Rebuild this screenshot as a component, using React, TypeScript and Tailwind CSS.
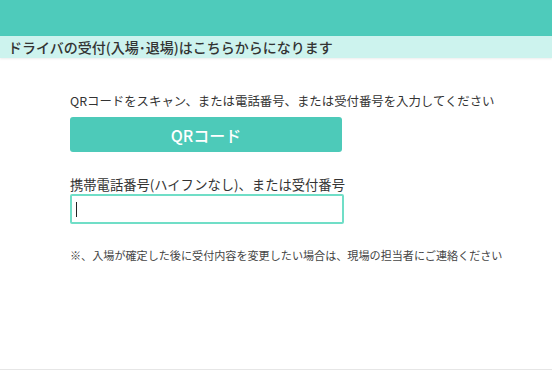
import React from "react";

export default function App() {
  return (
    <div className="flex h-[370px] w-[552px] flex-col border-b border-[#e6e6e6] bg-white font-['Noto_Sans_CJK_JP','Noto_Sans',sans-serif] text-[#333]">
      <div className="h-[36px] shrink-0 bg-[#4ecbbb]" />
      <div className="h-[22px] shrink-0 bg-[#cdf3ee] pl-2 text-[14px] font-medium leading-[22px] text-[#333] shadow-[0_1px_2px_rgba(0,0,0,0.08)]">
        ドライバの受付(入場･退場)はこちらからになります
      </div>
      <div className="flex flex-col pl-[70px]">
        <p className="mt-[35px] text-[12.4px] leading-[16px] whitespace-nowrap">
          QRコードをスキャン、または電話番号、または受付番号を入力してください
        </p>
        <button className="mt-[8px] flex h-[35px] w-[272px] items-center justify-center rounded-[3px] bg-[#4dcab9] text-[16px] font-medium text-white">
          QRコード
        </button>
        <label className="mt-[25px] text-[13.3px] leading-[16px] whitespace-nowrap">
          携帯電話番号(ハイフンなし)、または受付番号
        </label>
        <div className="relative mt-[1px] h-[30px] w-[274px]">
          <input
            className="h-full w-full rounded-[2px] border-2 border-[#70dec7] bg-white px-1 outline-none"
            type="text"
          />
          <span className="absolute left-[6px] top-[8px] h-[15px] w-[1px] bg-[#222]" />
        </div>
        <p className="mt-[24px] text-[11.1px] leading-[14px] whitespace-nowrap text-[#444]">
          ※、入場が確定した後に受付内容を変更したい場合は、現場の担当者にご連絡ください
        </p>
      </div>
    </div>
  );
}
